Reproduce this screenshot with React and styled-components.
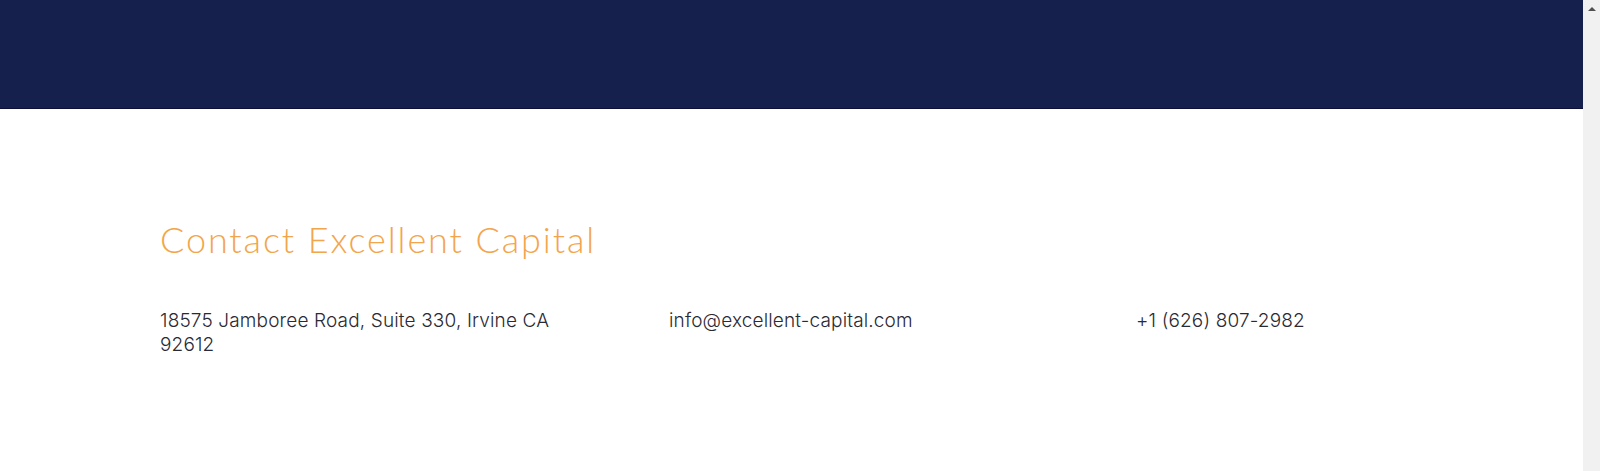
import React from "react";
import styled, { createGlobalStyle } from "styled-components";

const GlobalStyle = createGlobalStyle`
  html, body {
    margin: 0;
    padding: 0;
    background: #ffffff;
  }
  body {
    font-family: Inter, "Liberation Sans", sans-serif;
    overflow: hidden;
  }
`;

const contacts = [
  "18575 Jamboree Road, Suite 330, Irvine CA 92612",
  "info@excellent-capital.com",
  "+1 (626) 807-2982",
];

function App() {
  return (
    <>
      <GlobalStyle />
      <Frame>
        <Page>
          <TopBar />
          <ContactSection>
            <Title>Contact Excellent Capital</Title>
            <ContactGrid>
              {contacts.map((item) => (
                <ContactItem key={item}>{item}</ContactItem>
              ))}
            </ContactGrid>
          </ContactSection>
        </Page>
        <ScrollTrack>
          <UpArrow />
        </ScrollTrack>
      </Frame>
    </>
  );
}

export default App;

const Frame = styled.div`
  display: flex;
  width: 100vw;
  height: 100vh;
`;

const Page = styled.main`
  flex: 1;
  display: flex;
  flex-direction: column;
  min-width: 0;
`;

const TopBar = styled.header`
  height: 108px;
  background-color: #16204d;
  border-bottom: 1px solid #0b1136;
  flex-shrink: 0;
`;

const ContactSection = styled.section`
  padding: 109px 0 0 160px;
`;

const Title = styled.h2`
  margin: 0;
  font-family: Lato, "Open Sans", sans-serif;
  font-weight: 300;
  font-size: 36px;
  line-height: 1.2;
  letter-spacing: 1.9px;
  color: #f3a54c;
`;

const ContactGrid = styled.div`
  display: grid;
  grid-template-columns: 420px 378px 1fr;
  column-gap: 89px;
  margin-top: 48px;
`;

const ContactItem = styled.p`
  margin: 0;
  font-family: Inter, "Liberation Sans", sans-serif;
  font-weight: 300;
  font-size: 19px;
  line-height: 24px;
  letter-spacing: 0.15px;
  color: #2a2a33;
`;

const ScrollTrack = styled.div`
  width: 17px;
  flex-shrink: 0;
  background: #f1f1f1;
  display: flex;
  justify-content: center;
  padding-top: 7px;
  box-sizing: border-box;
`;

const UpArrow = styled.span`
  width: 0;
  height: 0;
  border-left: 4px solid transparent;
  border-right: 4px solid transparent;
  border-bottom: 4px solid #505050;
`;
